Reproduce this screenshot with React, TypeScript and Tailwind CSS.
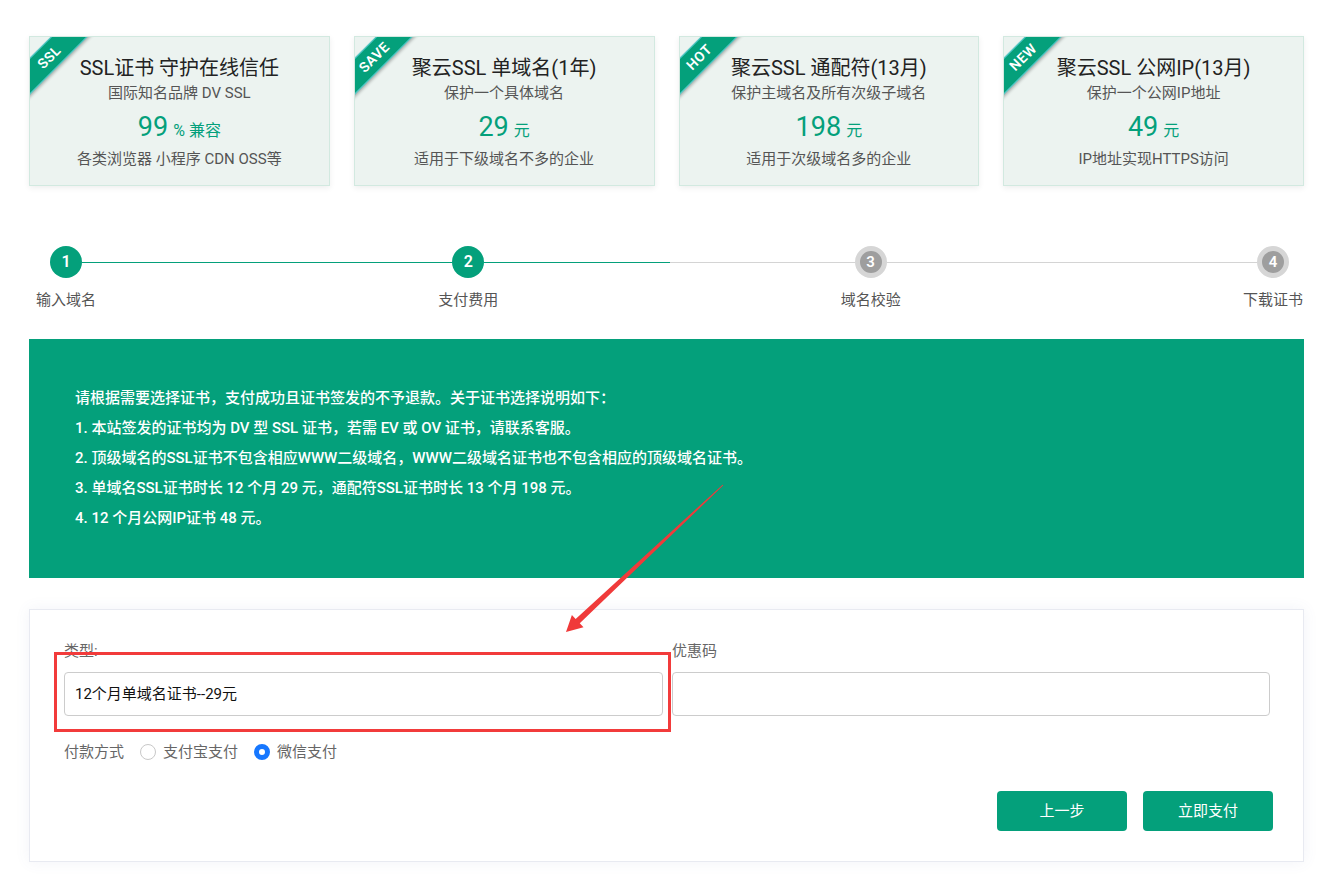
import React from "react";

type Card = { tag: string; title: string; sub: string; num: string; unit: string; desc: string };

const cards: Card[] = [
  { tag: "SSL", title: "SSL证书 守护在线信任", sub: "国际知名品牌 DV SSL", num: "99", unit: "% 兼容", desc: "各类浏览器 小程序 CDN OSS等" },
  { tag: "SAVE", title: "聚云SSL 单域名(1年)", sub: "保护一个具体域名", num: "29", unit: "元", desc: "适用于下级域名不多的企业" },
  { tag: "HOT", title: "聚云SSL 通配符(13月)", sub: "保护主域名及所有次级子域名", num: "198", unit: "元", desc: "适用于次级域名多的企业" },
  { tag: "NEW", title: "聚云SSL 公网IP(13月)", sub: "保护一个公网IP地址", num: "49", unit: "元", desc: "IP地址实现HTTPS访问" },
];

function PriceCard({ c }: { c: Card }) {
  return (
    <div className="relative h-[150px] overflow-hidden border border-[#d2e9e0] bg-[#ecf3f0] shadow-[0_2px_6px_rgba(0,0,0,0.07)]">
      <div className="absolute left-[-31px] top-[7px] flex h-[26px] w-[100px] -rotate-45 items-center justify-center border-y border-[#62cdd3] bg-[#04a07b] text-[14px] font-semibold tracking-[0.5px] text-white shadow-[0_2px_3px_rgba(0,0,0,0.25)]">
        {c.tag}
      </div>
      <div className="flex flex-col items-center pt-[17px]">
        <div className="text-[20px] leading-[28px] text-[#222]">{c.title}</div>
        <div className="text-[15px] leading-[22px] text-[#555]">{c.sub}</div>
        <div className="mt-[3px] flex items-baseline leading-[40px] text-[#04a07b]">
          <span className="text-[27px]">{c.num}</span>
          <span className="ml-[5px] text-[16px]">{c.unit}</span>
        </div>
        <div className="-mt-[3px] text-[15px] leading-[22px] text-[#555]">{c.desc}</div>
      </div>
    </div>
  );
}

function StepDot({ n, label, active }: { n: number; label: string; active: boolean }) {
  return (
    <div className="flex w-8 flex-col items-center">
      {active ? (
        <div className="flex h-8 w-8 items-center justify-center rounded-full bg-[#04a07b] text-[16px] font-semibold text-white">
          {n}
        </div>
      ) : (
        <div className="flex h-8 w-8 items-center justify-center rounded-full border-[5px] border-[#d6d6d6] bg-[#9e9e9e] text-[15px] font-semibold text-white">
          {n}
        </div>
      )}
      <div className="mt-[12px] whitespace-nowrap text-[15px] leading-5 text-[#555]">{label}</div>
    </div>
  );
}

export default function App() {
  return (
    <div className="relative min-h-[895px] w-full bg-white font-[Roboto,'Noto_Sans_CJK_SC',sans-serif]">
      <div className="px-[29px] pt-[36px] pb-[30px]">
        <div className="grid grid-cols-4 gap-[24px]">
          {cards.map((c) => (
            <PriceCard key={c.tag} c={c} />
          ))}
        </div>

        <div className="mt-[60px] flex items-start pl-[21px] pr-[15px]">
          <StepDot n={1} label="输入域名" active />
          <div className="flex h-8 flex-1 items-center">
            <div className="h-px w-full bg-[#04a07b]" />
          </div>
          <StepDot n={2} label="支付费用" active />
          <div className="flex h-8 flex-1 items-center">
            <div className="h-px flex-1 bg-[#04a07b]" />
            <div className="h-px flex-1 bg-[#d4d4d4]" />
          </div>
          <StepDot n={3} label="域名校验" active={false} />
          <div className="flex h-8 flex-1 items-center">
            <div className="h-px w-full bg-[#d4d4d4]" />
          </div>
          <StepDot n={4} label="下载证书" active={false} />
        </div>

        <div className="mt-[29px] bg-[#04a07b] pl-[46px] pt-[44px] pb-[45px] text-[15px] font-medium leading-[30px] text-white">
          <div>请根据需要选择证书，支付成功且证书签发的不予退款。关于证书选择说明如下：</div>
          <div>1. 本站签发的证书均为 DV 型 SSL 证书，若需 EV 或 OV 证书，请联系客服。</div>
          <div>2. 顶级域名的SSL证书不包含相应WWW二级域名，WWW二级域名证书也不包含相应的顶级域名证书。</div>
          <div>3. 单域名SSL证书时长 12 个月 29 元，通配符SSL证书时长 13 个月 198 元。</div>
          <div>4. 12 个月公网IP证书 48 元。</div>
        </div>

        <div className="relative mt-[31px] border border-[#e8eaf1] bg-white pl-[34px] pr-[30px] pt-[31px] pb-[30px] shadow-[0_0_14px_rgba(90,100,160,0.08)]">
          <div className="grid grid-cols-[599px_598px] gap-[9px]">
            <div>
              <div className="text-[15px] leading-5 text-[#666]">类型:</div>
              <div className="mt-[11px] flex h-[44px] items-center rounded-[4px] border border-[#cccccc] px-[10px] text-[15px] text-[#111]">
                12个月单域名证书--29元
              </div>
            </div>
            <div>
              <div className="text-[15px] leading-5 text-[#666]">优惠码</div>
              <div className="mt-[11px] h-[44px] rounded-[4px] border border-[#cccccc]" />
            </div>
          </div>

          <div className="mt-[26px] flex h-5 items-center text-[15px] text-[#666]">
            <span>付款方式</span>
            <span className="ml-[16px] h-[16px] w-[16px] rounded-full border border-[#c8c8c8] bg-white" />
            <span className="ml-[7px]">支付宝支付</span>
            <span className="ml-[16px] h-[16px] w-[16px] rounded-full border-[5px] border-[#1677ff] bg-white" />
            <span className="ml-[7px]">微信支付</span>
          </div>

          <div className="mt-[29px] flex justify-end gap-[16px]">
            <button className="h-[40px] w-[130px] rounded-[4px] bg-[#04a07b] text-[15px] text-white">上一步</button>
            <button className="h-[40px] w-[130px] rounded-[4px] bg-[#04a07b] text-[15px] text-white">立即支付</button>
          </div>

          <div className="pointer-events-none absolute left-[24px] top-[42px] h-[80px] w-[617px] border-[3px] border-[#f23b3b]" />
        </div>
      </div>

      <svg className="pointer-events-none absolute left-0 top-0" width="1333" height="895" viewBox="0 0 1333 895">
        <polygon
          points="722.66,484.63 575.65,618.9 571.9,614.9 566,632 583.5,627.3 579.75,623.3 723.34,485.37"
          fill="#f03a3a"
        />
      </svg>
    </div>
  );
}
